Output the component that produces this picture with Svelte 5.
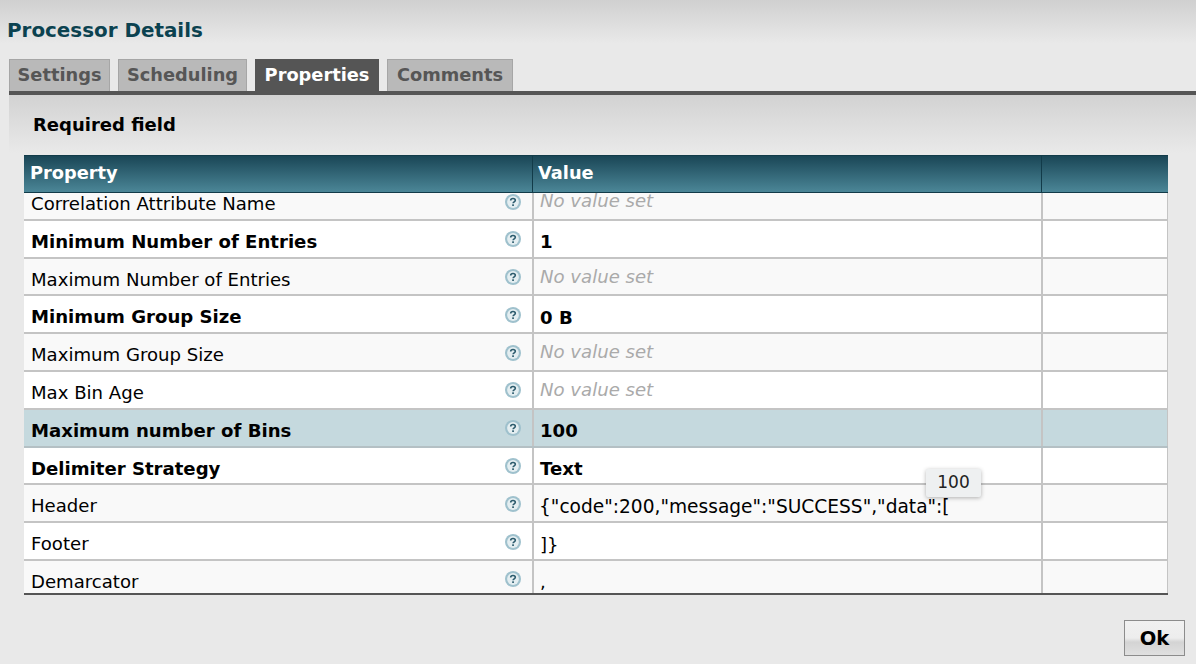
<script>
  const rows = [
    { name: 'Correlation Attribute Name', value: 'No value set', empty: true },
    { name: 'Minimum Number of Entries', value: '1', req: true },
    { name: 'Maximum Number of Entries', value: 'No value set', empty: true },
    { name: 'Minimum Group Size', value: '0 B', req: true },
    { name: 'Maximum Group Size', value: 'No value set', empty: true },
    { name: 'Max Bin Age', value: 'No value set', empty: true },
    { name: 'Maximum number of Bins', value: '100', req: true, sel: true },
    { name: 'Delimiter Strategy', value: 'Text', req: true },
    { name: 'Header', value: '{"code":200,"message":"SUCCESS","data":[', wide: true },
    { name: 'Footer', value: ']}' },
    { name: 'Demarcator', value: ',' }
  ];
  const tabs = ['Settings', 'Scheduling', 'Properties', 'Comments'];
</script>

<div class="dialog">
  <h1 class="title">Processor Details</h1>
  <div class="tabs">
    {#each tabs as t}
      <div class="tab" class:active={t === 'Properties'}>{t}</div>
    {/each}
  </div>
  <div class="panel">
    <div class="required">Required field</div>
    <div class="table">
      <div class="head">
        <div class="c1">Property</div>
        <div class="c2">Value</div>
        <div class="c3"></div>
      </div>
      <div class="viewport">
        <div class="list">
          {#each rows as r, i}
            <div class="row" class:odd={i % 2 === 0} class:sel={r.sel}>
              <div class="c1 name" class:bold={r.req}>
                <span>{r.name}</span>
                <svg class="help" viewBox="0 0 16 16" width="16" height="16" aria-hidden="true">
                  <circle cx="8" cy="8" r="8" fill="#9fc1cd" />
                  <circle cx="8" cy="8" r="5.9" fill="#e4eef1" />
                  <path d="M5.7 6.4c0-1.2 1-1.9 2.3-1.9s2.3.7 2.3 1.8c0 1.6-2.2 1.5-2.2 3" fill="none" stroke="#2c5b6d" stroke-width="1.6" />
                  <rect x="7.2" y="10.3" width="1.7" height="1.7" fill="#2c5b6d" />
                </svg>
              </div>
              <div class="c2 val" class:bold={r.req} class:empty={r.empty} class:wide={r.wide}>{r.value}</div>
              <div class="c3"></div>
            </div>
          {/each}
        </div>
      </div>
      <div class="tip">100</div>
    </div>
  </div>
  <div class="actions"><button class="ok">Ok</button></div>
</div>

<style>
  :global(body) {
    margin: 0;
    background: #e9e9e9;
  }
  .dialog {
    width: 1196px;
    height: 664px;
    overflow: hidden;
    display: flex;
    flex-direction: column;
    font-family: "DejaVu Sans", Verdana, sans-serif;
    background: linear-gradient(#d0d0d0 0, #e9e9e9 44px, #e9e9e9 100%);
    color: #000;
  }
  .title {
    margin: 0;
    padding: 18px 0 0 7px;
    height: 42px;
    box-sizing: border-box;
    font-size: 19.9px;
    line-height: 26px;
    font-weight: 700;
    color: #0b4250;
    white-space: nowrap;
  }
  .tabs {
    display: flex;
    gap: 8px;
    margin: 17px 0 0 9px;
    height: 32px;
  }
  .tab {
    box-sizing: border-box;
    height: 32px;
    background: #b9b9b9;
    border: 1px solid #a6a6a6;
    border-bottom: 0;
    color: #565656;
    font-size: 17.8px;
    font-weight: 700;
    line-height: 30px;
    text-align: center;
    white-space: nowrap;
  }
  .tab:nth-child(1) { width: 101px; }
  .tab:nth-child(2) { width: 129px; }
  .tab:nth-child(3) { width: 124px; }
  .tab:nth-child(4) { width: 126px; }
  .tab.active {
    background: #555;
    border-color: #555;
    color: #fff;
  }
  .panel {
    margin-left: 9px;
    border-top: 4px solid #555;
    height: 504px;
    padding: 0 28px 0 15px;
    background: linear-gradient(#d2d2d2 0, #e9e9e9 58px);
    position: relative;
    width: 1187px;
    box-sizing: border-box;
  }
  .required {
    height: 60px;
    padding: 19px 0 0 9px;
    box-sizing: border-box;
    font-size: 18px;
    line-height: 22px;
    font-weight: 700;
  }
  .table {
    position: relative;
    width: 1144px;
  }
  .head {
    display: grid;
    grid-template-columns: 508px 509px 127px;
    height: 38px;
    box-sizing: border-box;
    border-top: 1px solid #123b49;
    border-bottom: 1px solid #123b49;
    background: linear-gradient(#1a4656, #4b8697);
    color: #fff;
    font-size: 17.8px;
    font-weight: 700;
    line-height: 33px;
  }
  .head .c1 { padding-left: 6px; }
  .head .c2 { padding-left: 5px; border-left: 1px solid #123b49; }
  .head .c3 { border-left: 1px solid #123b49; }
  .viewport {
    overflow: hidden;
    border-bottom: 2px solid #555;
    box-sizing: border-box;
    height: 402px;
  }
  .list {
    margin-top: -10px;
  }
  .row {
    display: grid;
    grid-template-columns: 508px 509px 127px;
    height: 37.8px;
    box-sizing: border-box;
    border-bottom: 2px solid #c4c4c4;
    background: #fff;
    font-size: 18.1px;
  }
  .row.odd { background: #f9f9f9; }
  .row.sel { background: #c5d9de; border-bottom-color: #b4c0c4; }
  .c1, .c2, .c3 { min-width: 0; }
  .row .c2, .row .c3 { border-left: 2px solid #c4c4c4; }
  .row .c3 { border-right: 1px solid #c4c4c4; }
  .name {
    display: flex;
    justify-content: space-between;
    padding: 7px 11px 0 7px;
    line-height: 28px;
    white-space: nowrap;
  }
  .help {
    flex: none;
    margin-top: 3.5px;
  }
  .val {
    padding: 7.5px 0 0 6px;
    line-height: 28px;
    white-space: nowrap;
  }
  .bold { font-weight: 700; }
  .empty {
    font-style: italic;
    color: #aaa;
    padding-top: 3px;
    line-height: 30px;
  }
  .wide { font-size: 18.6px; padding-left: 5px; }
  .tip {
    position: absolute;
    left: 902px;
    top: 314px;
    width: 55px;
    height: 28px;
    box-sizing: border-box;
    background: #eef0f1;
    border-radius: 2px;
    box-shadow: 0 1px 4px rgba(0,0,0,.3);
    font-size: 17px;
    line-height: 27px;
    text-align: center;
    color: #222;
  }
  .actions {
    display: flex;
    justify-content: flex-end;
    padding: 25px 11px 0 0;
  }
  .ok {
    width: 61px;
    height: 36px;
    padding: 0;
    border: 1px solid #8c8c8c;
    background: linear-gradient(#f1f1f1 0, #ededed 50%, #d4d4d4 62%, #e0e0e0 100%);
    font-family: inherit;
    font-size: 19.5px;
    font-weight: 700;
    color: #000;
  }
</style>
